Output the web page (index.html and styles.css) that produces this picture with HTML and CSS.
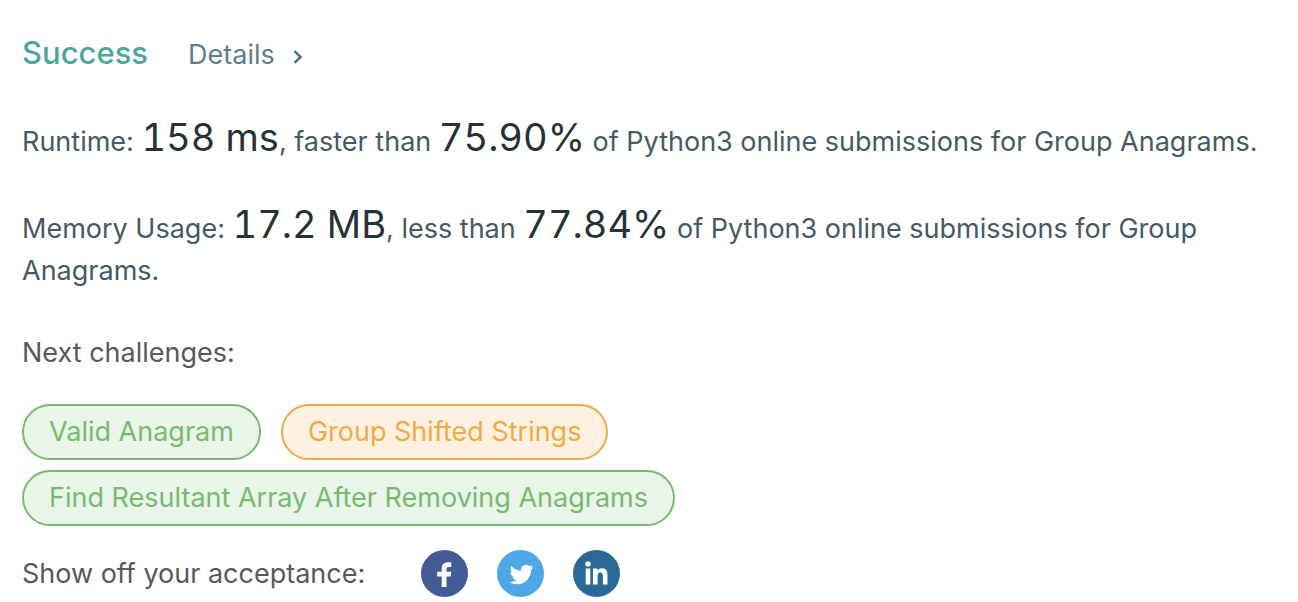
FILE: index.html
```html
<!DOCTYPE html>
<html lang="en">
<head>
    <meta charset="UTF-8">
    <meta name="viewport" content="width=device-width, initial-scale=1.0">
    <title>Submission Result</title>
    <link rel="stylesheet" href="styles.css">
</head>
<body>

    <main class="result">
        <div class="result-header">
            <h1 class="status">Success</h1>
            <a class="details" href="#details">Details
                <svg class="chevron" viewBox="0 0 10 14" aria-hidden="true"><path d="M1.500 1.200L7.500 7 1.500 12.800"/></svg>
            </a>
        </div>

        <p class="stat">Runtime: <span class="value">158 ms</span>, faster than <span class="value">75.90%</span> of Python3 online submissions for Group Anagrams.</p>
        <p class="stat">Memory Usage: <span class="value">17.2 MB</span>, less than <span class="value">77.84%</span> of Python3 online submissions for Group Anagrams.</p>

        <h2 class="next-title">Next challenges:</h2>
        <div class="challenges">
            <a class="tag easy" href="#valid-anagram">Valid Anagram</a>
            <a class="tag medium" href="#group-shifted-strings">Group Shifted Strings</a>
            <a class="tag easy" href="#find-resultant-array">Find Resultant Array After Removing Anagrams</a>
        </div>

        <div class="share">
            <span class="share-label">Show off your acceptance:</span>
            <div class="share-links">
                <a class="social facebook" href="#facebook" aria-label="Share on Facebook">
                    <svg viewBox="0 0 47 47"><path d="M25.500 37V26.500h4.200l.6-4.700h-4.800v-2.600c0-1.600.6-2.300 2.400-2.300h2.400v-4.500c-.6-.1-1.900-.2-3.200-.2-4 0-6.400 2.200-6.400 6.200v3.400h-4.500v4.700h4.500V37z"/></svg>
                </a>
                <a class="social twitter" href="#twitter" aria-label="Share on Twitter">
                    <svg viewBox="0 0 47 47"><g transform="translate(12.500 12.500)"><path d="M23.950 4.570a10 10 0 01-2.825.775 4.958 4.958 0 002.163-2.723c-.951.555-2.005.959-3.127 1.184a4.920 4.920 0 00-8.384 4.482C7.690 8.095 4.067 6.130 1.640 3.162a4.822 4.822 0 00-.666 2.475c0 1.710.870 3.213 2.188 4.096a4.904 4.904 0 01-2.228-.616v.060a4.923 4.923 0 003.946 4.827 4.996 4.996 0 01-2.212.085 4.936 4.936 0 004.604 3.417 9.867 9.867 0 01-6.102 2.105c-.390 0-.779-.023-1.170-.067a13.995 13.995 0 007.557 2.209c9.053 0 13.998-7.496 13.998-13.985 0-.210 0-.420-.015-.630A9.935 9.935 0 0024 4.590z"/></g></svg>
                </a>
                <a class="social linkedin" href="#linkedin" aria-label="Share on LinkedIn">
                    <svg viewBox="0 0 47 47"><circle cx="15" cy="14" r="2.700"/><path d="M12.700 18.600h4.600v15.900h-4.600zM20 18.600h4.400v2.200c.8-1.500 2.400-2.500 4.600-2.500 4.500 0 5.500 3 5.500 7.200v9h-4.600v-8c0-1.900-.3-4.100-2.500-4.100-2.300 0-2.800 1.900-2.800 4v8.100H20z"/></svg>
                </a>
            </div>
        </div>
    </main>

</body>
</html>
```
FILE: styles.css
```css
* {
    box-sizing: border-box;
}
body {
    margin: 0;
    background: #fff;
    color: #455a64;
    font-family: Inter, sans-serif;
    font-size: 27px;
    line-height: 42px;
}
a {
    text-decoration: none;
}
.result {
    padding: 32px 22px 6px;
}
.result-header {
    display: flex;
    align-items: baseline;
    gap: 40px;
    margin-bottom: 40px;
}
.status {
    margin: 0;
    color: #4ca69a;
    font-size: 31px;
    font-weight: 500;
}
.details {
    display: flex;
    align-items: baseline;
    gap: 18px;
    color: #607d8b;
}
.chevron {
    width: 10px;
    height: 14px;
    fill: none;
    stroke: #546e7a;
    stroke-width: 2.5;
}
.stat {
    margin: 0 0 40px;
}
.value {
    color: #263238;
    font-size: 38px;
    font-variant-numeric: tabular-nums;
}
.next-title {
    margin: 0 0 30px;
    color: #595959;
    font-size: 27px;
    font-weight: 400;
}
.challenges {
    display: flex;
    flex-wrap: wrap;
    gap: 10px 20px;
    max-width: 700px;
}
.tag {
    padding: 5px 25px;
    border: 2px solid;
    border-radius: 28px;
}
.easy {
    border-color: #7aba70;
    background: #e9f5e9;
    color: #7aba70;
}
.medium {
    border-color: #f2aa48;
    background: #fef1e0;
    color: #f2aa48;
}
.share {
    display: flex;
    align-items: center;
    gap: 56px;
    margin-top: 24px;
    color: #595959;
}
.share-links {
    display: flex;
    gap: 29px;
}
.social {
    width: 47px;
    height: 47px;
    border-radius: 50%;
}
.social svg {
    display: block;
    fill: #fff;
}
.facebook {
    background: #435a94;
}
.twitter {
    background: #4ea8e8;
}
.linkedin {
    background: #2b6998;
}
```
